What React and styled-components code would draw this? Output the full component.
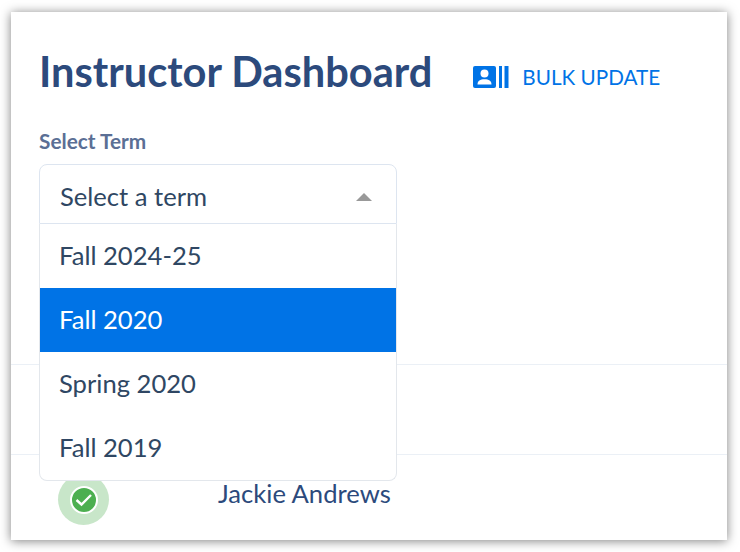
import React from "react";
import styled, { createGlobalStyle } from "styled-components";

const terms = ["Fall 2024-25", "Fall 2020", "Spring 2020", "Fall 2019"];

export default function App() {
  return (
    <React.Fragment>
      <GlobalStyle />
      <Card>
        <Header>
          <Title>Instructor Dashboard</Title>
          <BulkButton>
            <svg width="36" height="24" viewBox="0 0 36 24" aria-hidden="true">
              <rect x="0" y="1" width="23" height="22" rx="2" fill="#0073e6" />
              <circle cx="11.5" cy="8.5" r="4" fill="#fff" />
              <path d="M4.5 19.5c0-3.6 2.6-5.2 7-5.2s7 1.600 7 5.200z" fill="#fff" />
              <rect x="26" y="1" width="3" height="22" fill="#0073e6" />
              <rect x="31.500" y="1" width="4" height="22" fill="#0073e6" />
            </svg>
            Bulk Update
          </BulkButton>
        </Header>
        <Label>Select Term</Label>
        <SelectWrap>
          <Control>
            Select a term
            <Caret />
          </Control>
          <Menu>
            {terms.map(term => (
              <Option key={term} selected={term === "Fall 2020"}>
                {term}
              </Option>
            ))}
          </Menu>
        </SelectWrap>
        <Table>
          <Row />
          <StudentRow>
            <StatusRing>
              <StatusDot>
                <svg width="18" height="14" viewBox="0 0 18 14" aria-hidden="true">
                  <path
                    d="M1.500 7 6.500 11.500 16 2"
                    fill="none"
                    stroke="#fff"
                    strokeWidth="2.400"
                  />
                </svg>
              </StatusDot>
            </StatusRing>
            <Name>Jackie Andrews</Name>
          </StudentRow>
        </Table>
      </Card>
    </React.Fragment>
  );
}

const GlobalStyle = createGlobalStyle`
  html, body {
    margin: 0;
    background: #fff;
  }
  body {
    padding: 12px 13px 12px 11px;
    font-family: "Lato", sans-serif;
    overflow: hidden;
  }
`;

const Card = styled.div`
  height: 528px;
  padding: 0 0 0 28px;
  box-sizing: border-box;
  background: #fff;
  overflow: hidden;
  box-shadow: 0 1px 10px rgba(0, 0, 0, 0.5);
`;

const Header = styled.div`
  display: flex;
  align-items: center;
  height: 62px;
  padding-top: 28px;
`;

const Title = styled.h1`
  margin: 0;
  font-size: 41.6px;
  font-weight: 700;
  line-height: 60px;
  color: #2c4a7c;
`;

const BulkButton = styled.button`
  display: flex;
  align-items: center;
  gap: 13px;
  margin: 12px 0 0 41px;
  padding: 0;
  border: 0;
  background: none;
  font-family: inherit;
  font-size: 20.7px;
  text-transform: uppercase;
  color: #0073e6;
`;

const Label = styled.div`
  margin-top: 27px;
  font-size: 20.8px;
  font-weight: 700;
  line-height: 24px;
  color: #5b6f95;
`;

const SelectWrap = styled.div`
  position: relative;
  width: 358px;
  margin-top: 11px;
`;

const Control = styled.div`
  display: flex;
  align-items: center;
  justify-content: space-between;
  height: 60px;
  box-sizing: border-box;
  padding: 4px 24px 0 20px;
  border: 1px solid #dde5f0;
  border-radius: 8px 8px 0 0;
  font-size: 25.6px;
  color: #2f4763;
`;

const Caret = styled.span`
  width: 0;
  height: 0;
  margin-top: 2px;
  border-left: 8px solid transparent;
  border-right: 8px solid transparent;
  border-bottom: 8px solid #999;
`;

const Menu = styled.div`
  position: absolute;
  top: 60px;
  left: 0;
  right: 0;
  z-index: 2;
  background: #fff;
  border: 1px solid #e3e7ec;
  border-top: 0;
  border-radius: 0 0 8px 8px;
`;

const Option = styled.div`
  display: flex;
  align-items: center;
  height: 64px;
  box-sizing: border-box;
  padding: 0 0 2px 19px;
  font-size: 25.6px;
  color: ${props => (props.selected ? "#fff" : "#2f4763")};
  background: ${props => (props.selected ? "#0073e6" : "transparent")};
`;

const Table = styled.div`
  margin: 140px 0 0 -28px;
`;

const Row = styled.div`
  height: 90px;
  border-top: 1px solid #ebf0f6;
  box-sizing: border-box;
`;

const StudentRow = styled(Row)`
  display: flex;
  align-items: center;
  padding-left: 47px;
`;

const StatusRing = styled.div`
  display: flex;
  align-items: center;
  justify-content: center;
  width: 51px;
  height: 51px;
  border-radius: 50%;
  background: #c8e6c9;
`;

const StatusDot = styled.div`
  display: flex;
  align-items: center;
  justify-content: center;
  width: 24px;
  height: 24px;
  border-radius: 50%;
  background: #4caf50;
  border: 2.500px solid #fff;
  box-sizing: content-box;
`;

const Name = styled.div`
  margin: -14px 0 0 109px;
  font-size: 25.6px;
  color: #2c4a7c;
`;
